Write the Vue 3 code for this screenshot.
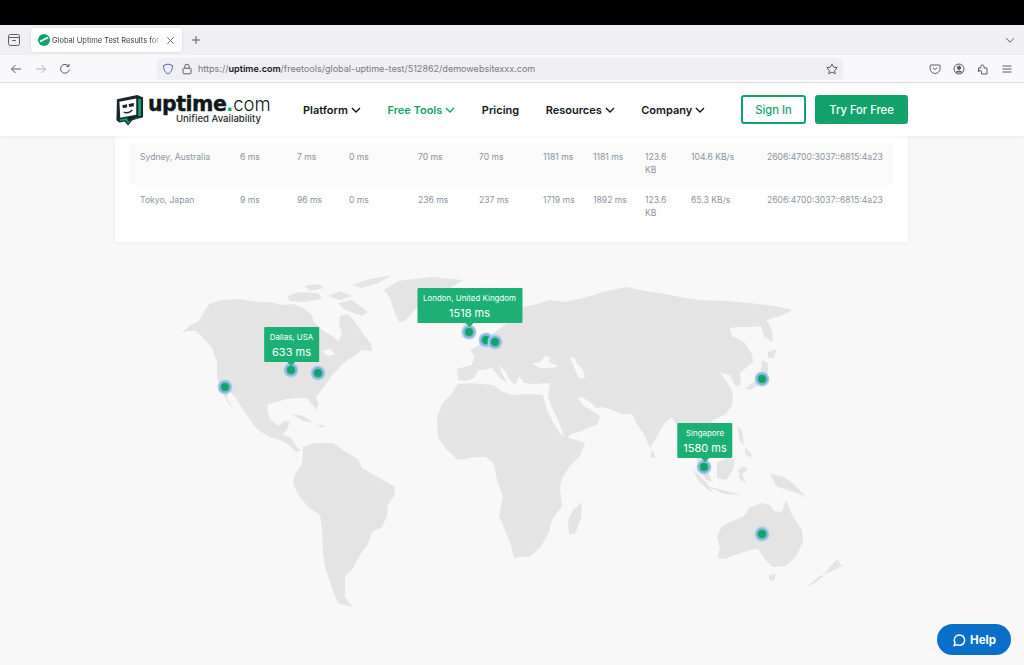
<template>
  <div class="page">
    <div class="topbar"></div>

    <div class="tabstrip">
      <svg class="ic tabs-ic" viewBox="0 0 14 14"><path d="M3.500 1.500h7a2 2 0 0 1 2 2v7a2 2 0 0 1-2 2h-7a2 2 0 0 1-2-2v-7a2 2 0 0 1 2-2ZM1.500 4.500h11M5.200 7.500h3.600"/></svg>
      <div class="tab">
        <svg class="favicon" viewBox="0 0 12 12"><circle cx="6" cy="6" r="6" fill="#12a36d"/><path d="M2 7.500 10 3.500" stroke="#fff" stroke-width="1.600"/></svg>
        <span class="tab-title">Global Uptime Test Results for d</span>
        <svg class="ic tab-x" viewBox="0 0 10 10"><path d="M1.500 1.500l7 7M8.500 1.500l-7 7"/></svg>
      </div>
      <svg class="ic plus" viewBox="0 0 10 10"><path d="M5 1v8M1 5h8"/></svg>
      <svg class="ic tab-more" viewBox="0 0 10 10"><path d="M1 3.200l4 4 4-4"/></svg>
    </div>

    <div class="toolbar">
      <svg class="ic tb back" viewBox="0 0 12 12"><path d="M11 6H1.500M5.500 2 1.500 6l4 4"/></svg>
      <svg class="ic tb fwd" viewBox="0 0 12 12"><path d="M1 6h9.500M6.500 2l4 4-4 4"/></svg>
      <svg class="ic tb reload" viewBox="0 0 12 12"><path d="M10.300 6.600A4.400 4.400 0 1 1 9.400 3M10 .9V3.500H7.400"/></svg>
      <div class="urlbar">
        <svg class="ic shield" viewBox="0 0 12 12"><path d="M6 1 10.500 2.400C10.600 6.600 9 9.600 6 11 3 9.600 1.400 6.600 1.500 2.400Z"/></svg>
        <svg class="ic lock" viewBox="0 0 12 12"><rect x="2" y="5.200" width="8" height="5.600" rx="1"/><path d="M3.800 5.200V3.400a2.200 2.200 0 0 1 4.400 0v1.800"/></svg>
        <span class="url"><i>https://</i><b>uptime.com</b><i>/freetools/global-uptime-test/512862/demowebsitexxx.com</i></span>
        <svg class="ic star" viewBox="0 0 12 12"><path d="M6 .9 7.600 4.200l3.600.5-2.600 2.500.6 3.600L6 9.100l-3.200 1.700.6-3.600L.8 4.700l3.600-.5Z"/></svg>
      </div>
      <div class="tb-right">
        <svg class="ic" viewBox="0 0 12 12"><path d="M1.500 2h9a.6.6 0 0 1 .6.6V5.500a5 5 0 0 1-10 0V2.600A.6.6 0 0 1 1.500 2ZM4 4.800l2 1.800 2-1.800"/></svg>
        <svg class="ic" viewBox="0 0 12 12"><circle cx="6" cy="6" r="5"/><circle cx="6" cy="4.700" r="1.700" fill="#5b5b66"/><path d="M2.800 9.500c.6-1.800 5.800-1.800 6.400 0" fill="#5b5b66"/></svg>
        <svg class="ic" viewBox="0 0 12 12"><path d="M1.500 5h2.300V3.500a1.600 1.600 0 0 1 3.200 0V5H10v6H4.500V9a1.300 1.300 0 0 0-3 0Z"/></svg>
        <svg class="ic" viewBox="0 0 12 12"><path d="M1.500 3h9M1.500 6h9M1.500 9h9"/></svg>
      </div>
    </div>

    <header class="site-header">
      <div class="logo">
        <svg class="logo-mark" viewBox="0 0 30 33">
          <path d="M2 5.500 23 1 29 3.500V24L18 27 13.500 32.500 10 28.500 4.500 29.500 1.500 27Z" fill="#17262a"/>
          <path d="M4.500 8 22 4.500V21.500L5.500 24.500Z" fill="#fff"/>
          <path d="M24 4.500 27 5.500V22.500L24 23Z" fill="#12a36d"/>
          <path d="M4.500 26.200 12.500 24.800 13.800 28.500 22 24.500 25 24.500 17.300 26.600 13.600 30.600 10.800 27 5 28Z" fill="#12a36d"/>
          <path d="M7.500 11.500 12.500 10.500V13.800L8.200 14.500ZM14 10.200 19.500 9.200V12.500L14.700 13.400Z" fill="#17262a"/>
          <path d="M9 18.800C12 20 15.500 19 18 16.500" fill="none" stroke="#17262a" stroke-width="1.400"/>
        </svg>
        <div class="logo-text">
          <div class="wordmark"><b>uptime</b><em>.</em><span>com</span></div>
          <div class="tagline">Unified Availability</div>
        </div>
      </div>
      <nav class="nav">
        <a v-for="item in navItems" :key="item.label" :class="{ active: item.active }">
          {{ item.label }}
          <svg v-if="item.menu" viewBox="0 0 10 6"><path d="M1 1l4 4 4-4"/></svg>
        </a>
      </nav>
      <div class="actions">
        <button class="btn outline">Sign In</button>
        <button class="btn solid">Try For Free</button>
      </div>
    </header>

    <main class="content">
      <section class="card">
        <div v-for="(row, i) in rows" :key="row[0]" class="row" :class="{ striped: i === 0 }">
          <span v-for="(cell, j) in row" :key="j">{{ cell }}</span>
        </div>
      </section>

      <div class="map">
        <svg class="world" viewBox="0 243 1024 422">
          <path v-for="(d, i) in land" :key="i" :d="d" fill-rule="evenodd"/>
        </svg>
        <div v-for="pin in pins" :key="pin.x" class="pin" :style="{ left: pin.x + 'px', top: pin.y - 243 + 'px' }"></div>
        <div v-for="tip in tips" :key="tip.city" class="tip" :style="{ left: tip.x + 'px', top: tip.y - 243 + 'px' }">
          <div class="tip-city">{{ tip.city }}</div>
          <div class="tip-time">{{ tip.time }}</div>
        </div>
      </div>
    </main>

    <button class="help">
      <svg viewBox="0 0 14 14"><path d="M2.200 12.500 3 9.800A5.200 5.200 0 1 1 5 11.700Z"/></svg>
      Help
    </button>
  </div>
</template>

<script setup>
const navItems = [
  { label: 'Platform', menu: true },
  { label: 'Free Tools', menu: true, active: true },
  { label: 'Pricing' },
  { label: 'Resources', menu: true },
  { label: 'Company', menu: true },
]

const ip = '2606:4700:3037::6815:4a23'
const rows = [
  ['Sydney, Australia', '6 ms', '7 ms', '0 ms', '70 ms', '70 ms', '1181 ms', '1181 ms', '123.6 KB', '104.6 KB/s', ip],
  ['Tokyo, Japan', '9 ms', '96 ms', '0 ms', '236 ms', '237 ms', '1719 ms', '1892 ms', '123.6 KB', '65.3 KB/s', ip],
]

const pins = [
  { x: 225, y: 387 },
  { x: 291, y: 370 },
  { x: 318, y: 373 },
  { x: 469, y: 332 },
  { x: 486, y: 340 },
  { x: 495, y: 342 },
  { x: 762, y: 379 },
  { x: 704, y: 467 },
  { x: 762, y: 534 },
]

// x is the centre of the tooltip, y its bottom edge
const tips = [
  { city: 'Dallas, USA', time: '633 ms', x: 291.500, y: 362 },
  { city: 'London, United Kingdom', time: '1518 ms', x: 469.500, y: 323 },
  { city: 'Singapore', time: '1580 ms', x: 705, y: 458 },
]

// rough continent outlines, in page coordinates
const land = [
  // north america, with hudson bay open to the north
  'M182 333 190 325 198 322 204 312 209 304 222 300 240 299 258 302 270 302 282 305 294 304 303 308 311 314 314 322 322 330 332 336 338 341 342 334 339 324 340 316 347 314 352 318 358 326 364 335 371 344 372 351 362 350 354 356 347 360 340 367 333 374 326 384 320 392 316 397 319 404 316 410 307 398 300 398 286 399 277 402 268 404 267 411 271 420 279 426 284 421 290 421 287 430 282 434 291 438 297 447 301 450 296 452 289 445 280 440 270 437 258 430 250 420 242 408 236 398 228 390 227 398 234 410 229 404 222 392 217 378 217 362 212 348 205 340 196 331 188 331Z M322 351 330 349 335 354 328 356Z',
  // arctic islands
  'M287 296 300 292 318 293 322 299 306 302 290 301ZM328 296 340 291 352 296 340 300ZM338 303 352 300 368 312 362 316 345 310ZM352 285 370 279 392 275 378 283 362 288ZM304 286 318 284 324 288 310 291Z',
  // greenland
  'M398 281 430 277 463 280 450 288 440 297 428 303 414 310 405 321 399 322 394 311 390 298 384 290Z',
  // iceland
  'M428 300 440 298 444 303 434 307Z',
  // uk
  'M459 316 466 313 470 326 474 334 462 338 461 330 464 325Z',
  // cuba and hispaniola
  'M292 414 303 416 314 423 303 421ZM317 424 326 426 322 428Z',
  // south america
  'M303 447 315 443 333 443 346 452 358 459 362 468 376 476 395 487 394 496 388 505 387 516 382 527 372 532 368 544 362 552 356 562 352 570 345 576 345 586 345 597 353 607 344 605 338 603 332 588 326 570 323 555 322 530 320 515 308 507 298 494 293 483 295 474 302 464 303 455Z',
  // africa
  'M437 418 442 404 453 392 458 384 470 383 493 385 503 392 513 395 530 394 543 395 547 410 553 422 561 435 585 443 580 456 570 466 562 478 560 488 562 506 552 520 549 532 540 548 530 556 514 558 511 545 504 528 499 516 503 497 497 480 494 464 486 457 476 457 458 460 447 450 438 438Z',
  // madagascar
  'M582 502 581 518 575 534 569 534 568 520 573 510Z',
  // eurasia with arabia, india and indochina; black sea and caspian are holes
  'M457 369 472 365 474 356 470 350 478 346 486 338 498 330 508 322 515 314 523 307 537 304 550 300 565 302 587 297 606 291 627 287 645 291 660 293 680 297 700 300 725 301 750 303 775 306 793 310 780 316 767 320 772 330 773 342 764 337 761 326 750 327 738 327 730 328 732 336 744 342 752 354 753 362 746 368 740 373 741 384 736 387 730 375 720 373 727 382 733 393 732 405 726 414 712 421 714 432 720 442 722 452 714 458 706 444 702 452 705 464 712 482 706 480 700 470 696 458 693 440 684 430 676 424 672 417 664 424 656 438 650 448 645 436 637 424 632 414 622 414 612 410 602 407 597 408 590 402 582 397 578 398 584 406 592 411 600 416 598 424 584 430 572 434 565 439 558 420 552 408 548 397 550 383 535 384 524 383 519 376 515 385 510 380 505 371 498 364 503 375 507 383 500 378 492 368 484 370 478 370 474 378 466 381 458 380Z M532 364 540 362 545 356 550 357 549 362 558 366 552 368 540 368Z M570 357 575 358 577 364 583 370 585 378 579 378 575 370Z',
  // japan
  'M762 360 768 363 768 372 760 384 750 390 745 388 754 382 760 376ZM768 352 776 349 774 358 768 358Z',
  // sri lanka
  'M651 451 654 452 655 458 651 458Z',
  // sumatra, java, borneo, sulawesi
  'M692 468 706 482 713 492 708 490 698 480ZM707 486 722 490 742 495 724 494ZM717 462 728 458 735 460 733 470 726 480 717 478ZM738 470 744 466 748 470 742 474 746 482 740 480Z',
  // philippines
  'M737 426 742 430 744 445 740 442ZM745 448 752 454 750 458 745 454Z',
  // new guinea
  'M770 474 782 476 793 483 806 497 797 493 787 490 776 486Z',
  // australia
  'M717 537 722 526 735 520 744 516 750 507 762 503 770 505 774 511 782 512 786 500 792 515 802 530 803 542 796 556 786 566 772 567 764 558 758 549 750 550 738 554 724 559 717 558 720 548Z',
  // tasmania
  'M769 575 776 574 774 581 769 580Z',
  // new zealand
  'M837 559 842 566 830 572 824 574ZM825 575 815 583 806 587 820 576Z',
]
</script>

<style>
html, body { margin: 0; background: #f8f8f8; }
</style>

<style scoped>
.page {
  position: relative;
  width: 1024px;
  height: 665px;
  overflow: hidden;
  background: #f8f8f8;
  font-family: Inter, "Liberation Sans", sans-serif;
}
.topbar { height: 25px; background: #000; }

.ic { fill: none; stroke: #5b5b66; stroke-width: 1; flex: none; }

.tabstrip {
  display: flex;
  align-items: center;
  height: 30px;
  background: #f0f0f4;
  padding-left: 7px;
}
.tabs-ic { width: 14px; height: 14px; }
.tab {
  display: flex;
  align-items: center;
  width: 151px;
  height: 24px;
  box-sizing: border-box;
  margin-left: 10px;
  padding: 0 7px;
  background: #fff;
  border-radius: 3px;
  box-shadow: 0 0 3px rgba(0, 0, 0, 0.12);
}
.favicon { width: 12px; height: 12px; flex: none; }
.tab-title {
  flex: 1;
  margin-left: 2px;
  font-size: 7.500px;
  color: #3b3b45;
  white-space: nowrap;
  overflow: hidden;
  -webkit-mask-image: linear-gradient(90deg, #000 88%, transparent);
  mask-image: linear-gradient(90deg, #000 88%, transparent);
}
.tab-x { width: 9px; height: 9px; margin-left: 2px; }
.plus { width: 10px; height: 10px; margin-left: 9px; }
.tab-more { width: 10px; height: 10px; margin-left: auto; margin-right: 9px; }

.toolbar {
  display: flex;
  align-items: center;
  height: 27px;
  background: #f9f9fb;
  border-bottom: 1px solid #dedee2;
}
.tb { width: 12px; height: 12px; }
.back { margin-left: 10px; }
.fwd { margin-left: 13px; opacity: 0.45; }
.reload { margin-left: 12px; }
.urlbar {
  display: flex;
  align-items: center;
  width: 686px;
  height: 22px;
  box-sizing: border-box;
  margin-left: 86px;
  padding: 0 5px;
  background: #f0f0f4;
  border-radius: 4px;
}
.shield { width: 12px; height: 12px; stroke: #5a5fc8; }
.lock { width: 12px; height: 12px; margin-left: 7px; }
.url { margin-left: 5px; font-size: 9.050px; white-space: nowrap; color: #15141a; }
.url i { font-style: normal; color: #7a7a84; }
.url b { font-weight: 600; }
.star { width: 12px; height: 12px; margin-left: auto; }
.tb-right {
  display: flex;
  align-items: center;
  gap: 12px;
  margin-left: 86px;
}
.tb-right svg { width: 12px; height: 12px; }

.site-header {
  position: relative;
  z-index: 2;
  display: flex;
  align-items: center;
  height: 53px;
  padding: 0 116px 0 115px;
  background: #fff;
  box-shadow: 0 1px 4px rgba(0, 0, 0, 0.05);
}
.logo { display: flex; align-items: center; width: 156px; flex: none; }
.logo-mark { width: 29px; height: 32px; flex: none; }
.logo-text { margin-left: 4px; }
.wordmark {
  display: flex;
  align-items: baseline;
  height: 18px;
  line-height: 18px;
  white-space: nowrap;
  color: #10181b;
}
.wordmark b {
  font-family: "DejaVu Sans", sans-serif;
  font-size: 20.500px;
  font-weight: 700;
  letter-spacing: -0.5px;
  -webkit-text-stroke: 0.4px #10181b;
}
.wordmark em { font-family: "DejaVu Sans", sans-serif; font-style: normal; font-size: 18px; font-weight: 700; color: #12a36d; }
.wordmark span { font-size: 18.500px; font-weight: 300; }
.tagline {
  margin-left: 28px;
  font-size: 9.600px;
  line-height: 12px;
  font-weight: 500;
  color: #1f2a2d;
  white-space: nowrap;
}

.nav { display: flex; align-items: center; gap: 26.500px; margin-left: 32px; }
.nav a {
  display: flex;
  align-items: center;
  gap: 3px;
  font-size: 11px;
  font-weight: 600;
  color: #10181b;
  white-space: nowrap;
}
.nav a.active { color: #12a36d; }
.nav svg { width: 10px; height: 6px; fill: none; stroke: currentColor; stroke-width: 1.400; }

.actions { display: flex; gap: 9px; margin-left: auto; }
.btn {
  height: 29px;
  box-sizing: border-box;
  border-radius: 3px;
  font-family: inherit;
  font-size: 11.200px;
  font-weight: 500;
  padding: 0;
}
.outline { width: 65px; background: #fff; border: 2px solid #12a36d; color: #12a36d; }
.solid { width: 93px; background: #12a36d; border: 0; color: #fff; }

.card {
  width: 793px;
  height: 106px;
  box-sizing: border-box;
  margin-left: 115px;
  padding: 7px 15px 15px;
  background: #fff;
  box-shadow: 0 1px 4px rgba(0, 0, 0, 0.05);
}
.row {
  display: grid;
  grid-template-columns: 100px 57px 52px 69px 61px 64px 50px 52px 46px 76px 1fr;
  height: 42px;
  box-sizing: border-box;
  padding: 8px 0 8px 10px;
  font-size: 8.600px;
  line-height: 13px;
  color: #8a94a0;
}
.row + .row { padding-top: 9px; }
.row.striped { background: #fafafa; }
.row span:nth-child(9) { max-width: 30px; }
.row span:last-child { white-space: nowrap; }

.map { position: relative; height: 422px; margin-top: 1px; }
.world { position: absolute; left: 0; top: 0; width: 1024px; height: 422px; }
.world path { fill: #e4e4e4; }

.pin {
  position: absolute;
  width: 8px;
  height: 8px;
  margin: -4px 0 0 -4px;
  border-radius: 50%;
  background: #12a36d;
  box-shadow: 0 0 0 2px #7fb4d2, 0 0 0 3.500px #a8d0ea;
}
.tip {
  position: absolute;
  transform: translate(-50%, -100%);
  box-sizing: border-box;
  min-width: 53px;
  height: 35px;
  padding: 4px 6px 0;
  background: #1cb075;
  border-radius: 1px;
  color: #fff;
  text-align: center;
  white-space: nowrap;
}
.tip::after {
  content: "";
  position: absolute;
  left: 50%;
  bottom: -4px;
  margin-left: -4px;
  border: 4px solid transparent;
  border-bottom: 0;
  border-top-color: #1cb075;
}
.tip-city { font-size: 7.950px; line-height: 13px; }
.tip-time { font-size: 11px; line-height: 16px; }

.help {
  position: absolute;
  left: 937px;
  top: 624px;
  display: flex;
  align-items: center;
  justify-content: center;
  gap: 4px;
  width: 74px;
  height: 31px;
  border: 0;
  border-radius: 16px;
  background: #0a6fc9;
  color: #fff;
  font-family: inherit;
  font-size: 11.500px;
  font-weight: 700;
}
.help svg { width: 14px; height: 14px; fill: none; stroke: #fff; stroke-width: 1.500; }
</style>
